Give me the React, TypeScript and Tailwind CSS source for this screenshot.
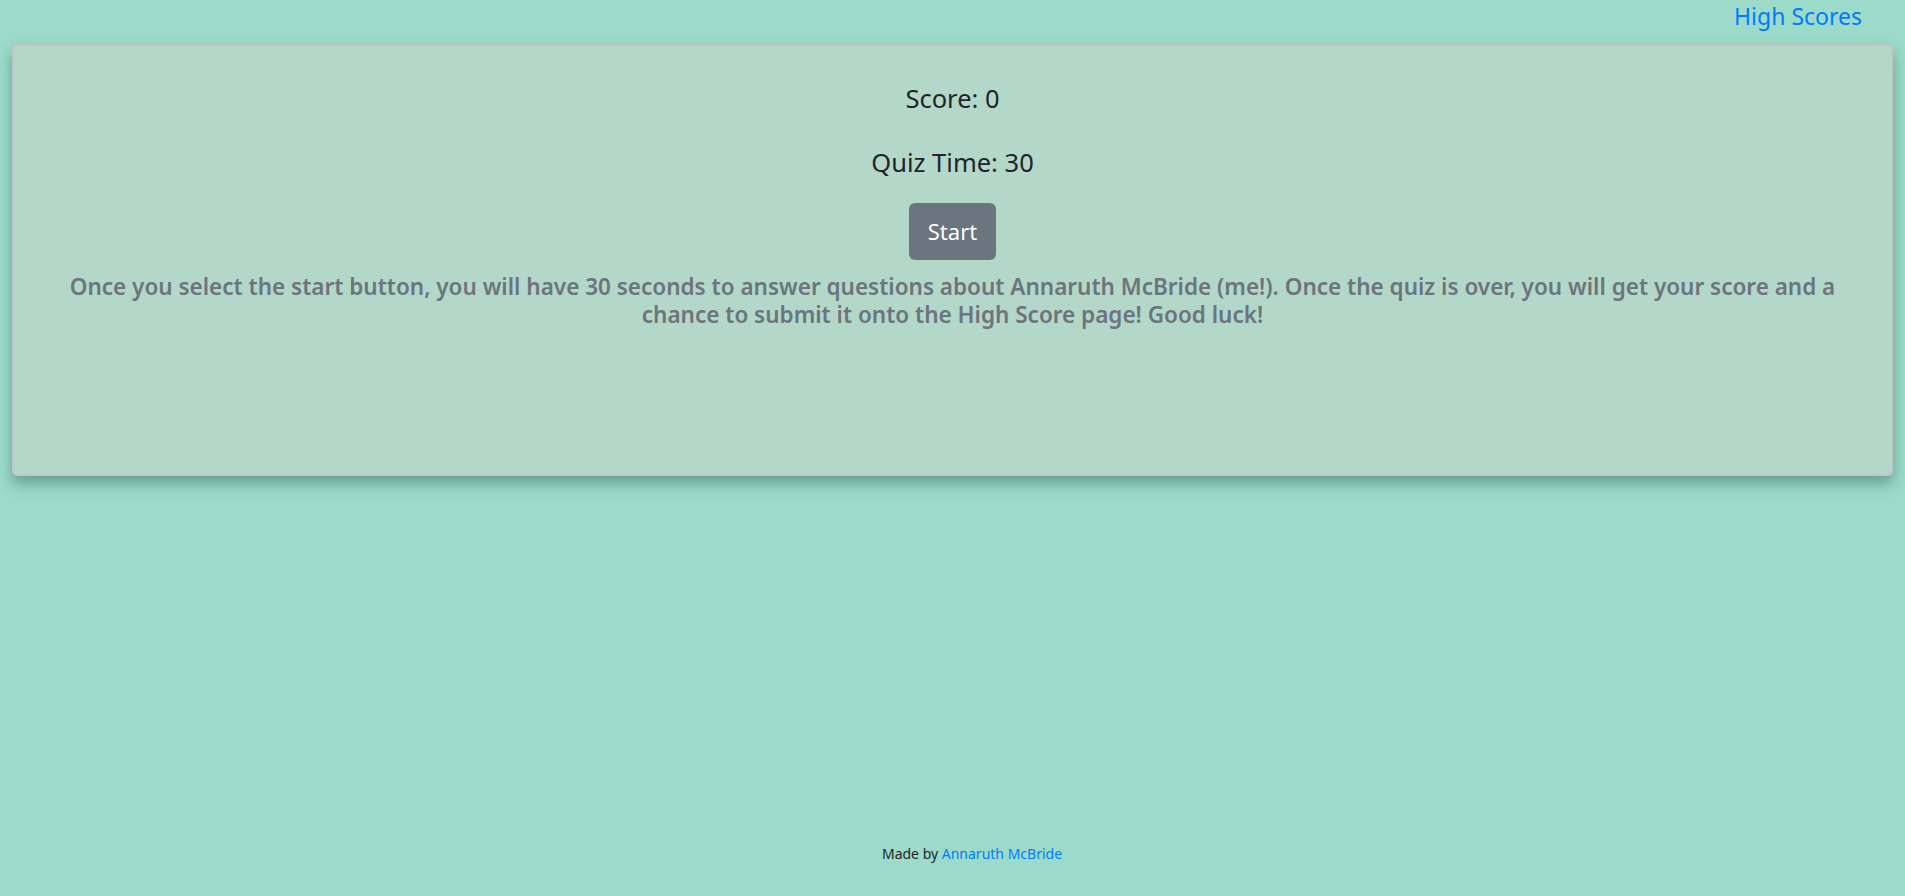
const App = () => {
  return (
    <div className="min-h-screen flex flex-col bg-[#9cdbc9] font-['Noto_Sans',sans-serif]">
      <nav className="flex justify-end pr-[43px] h-[32px] items-center">
        <a href="#highscores" className="text-[#007bff] text-[23px] leading-none">
          High Scores
        </a>
      </nav>

      <main className="px-[12px] pt-[12px]">
        <div className="h-[432px] rounded-[5px] border-2 border-[#c3c6c3] bg-[#b3d7c9] shadow-[0_8px_14px_rgba(40,90,80,0.45)] flex flex-col items-center pt-[35px]">
          <h4 className="text-[#212529] text-[25.5px] leading-[34px]">Score: 0</h4>
          <h4 className="text-[#212529] text-[25.5px] leading-[34px] mt-[30px]">Quiz Time: 30</h4>
          <button className="mt-[24px] h-[57px] px-[19px] rounded-[6px] bg-[#6c757d] text-white text-[22px]">
            Start
          </button>
          <p className="mt-[13px] px-[50px] text-center text-[#6c757d] font-semibold text-[22.5px] leading-[28px]">
            Once you select the start button, you will have 30 seconds to answer questions about Annaruth McBride (me!). Once the quiz is over, you will get your score and a
            <br />
            chance to submit it onto the High Score page! Good luck!
          </p>
        </div>
      </main>

      <footer className="mt-auto pb-[32px] pl-[39px] text-center text-[14px] text-[#212529]">
        Made by <a href="#about" className="text-[#007bff]">Annaruth McBride</a>
      </footer>
    </div>
  );
};

export default App;
